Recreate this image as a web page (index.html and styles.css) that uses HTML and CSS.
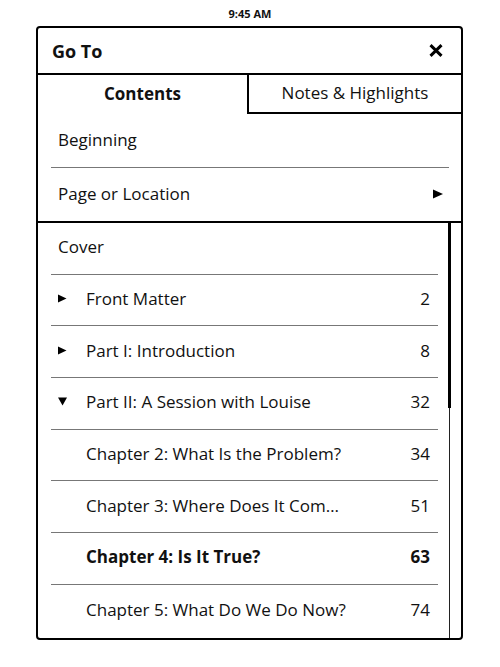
FILE: index.html
```html
<!DOCTYPE html>
<html>
<head>
<meta charset="utf-8">
<link rel="stylesheet" href="styles.css">
</head>
<body>
<div class="status">9:45 AM</div>
<div class="dialog">
  <div class="header">
    <span class="title">Go To</span>
    <svg class="close" width="14" height="13" viewBox="0 0 14 13"><path d="M1.5 1.2 L12.5 11.8 M12.5 1.2 L1.5 11.8" stroke="#000" stroke-width="3" fill="none"/></svg>
  </div>
  <div class="tabs">
    <div class="tab active">Contents</div>
    <div class="tab other">Notes &amp; Highlights</div>
  </div>
  <div class="fixed">
    <div class="frow"><span>Beginning</span></div>
    <div class="frow"><span>Page or Location</span><svg width="10" height="10" viewBox="0 0 10 10"><path d="M0 0.5 L10 5 L0 9.5Z" fill="#000"/></svg></div>
  </div>
  <div class="list">
    <div class="toc">
      <div class="row"><span class="label">Cover</span></div>
      <div class="row"><span class="exp"><svg width="9" height="9" viewBox="0 0 9 9"><path d="M0 0.5 L8.5 4.5 L0 8.5Z" fill="#000"/></svg></span><span class="label">Front Matter</span><span class="num">2</span></div>
      <div class="row"><span class="exp"><svg width="9" height="9" viewBox="0 0 9 9"><path d="M0 0.5 L8.5 4.5 L0 8.5Z" fill="#000"/></svg></span><span class="label">Part I: Introduction</span><span class="num">8</span></div>
      <div class="row"><span class="exp"><svg width="9" height="9" viewBox="0 0 9 9"><path d="M0 0.5 L9 0.5 L4.5 8.5Z" fill="#000"/></svg></span><span class="label">Part II: A Session with Louise</span><span class="num">32</span></div>
      <div class="row"><span class="exp"></span><span class="label">Chapter 2: What Is the Problem?</span><span class="num">34</span></div>
      <div class="row"><span class="exp"></span><span class="label">Chapter 3: Where Does It Com…</span><span class="num">51</span></div>
      <div class="row current"><span class="exp"></span><span class="label">Chapter 4: Is It True?</span><span class="num">63</span></div>
      <div class="row"><span class="exp"></span><span class="label">Chapter 5: What Do We Do Now?</span><span class="num">74</span></div>
    </div>
    <div class="track"><div class="thumb"></div></div>
  </div>
</div>
</body>
</html>
```

FILE: styles.css
```css
body {
  margin: 0;
  width: 500px;
  height: 667px;
  overflow: hidden;
  background: #fff;
  color: #111;
  font-family: "Open Sans", "Noto Sans", sans-serif;
}

.status {
  height: 26px;
  display: flex;
  align-items: center;
  justify-content: center;
  font-size: 11px;
  font-weight: 700;
}

.dialog {
  margin-left: 36px;
  width: 427px;
  height: 614px;
  box-sizing: border-box;
  border: 2px solid #000;
  border-radius: 4px;
  display: flex;
  flex-direction: column;
  overflow: hidden;
}

.header {
  height: 46.5px;
  flex: none;
  box-sizing: border-box;
  border-bottom: 2px solid #000;
  display: flex;
  align-items: center;
  justify-content: space-between;
  padding: 1px 18px 0 14px;
}

.title {
  font-size: 18px;
  font-weight: 700;
}

.close {
  display: block;
}

.tabs {
  display: flex;
  height: 39.5px;
  flex: none;
}

.tab {
  box-sizing: border-box;
  display: flex;
  align-items: center;
  justify-content: center;
  font-size: 17px;
  padding-bottom: 1px;
}

.tab.active {
  width: 209px;
  font-weight: 700;
}

.tab.other {
  flex: 1;
  border-left: 2px solid #000;
  border-bottom: 2px solid #000;
}

.fixed {
  flex: none;
  border-bottom: 2px solid #000;
}

.frow {
  height: 54px;
  box-sizing: border-box;
  margin: 0 12px 0 13px;
  padding: 0 6px 2px 7px;
  display: flex;
  align-items: center;
  justify-content: space-between;
  border-bottom: 1px solid #777;
  font-size: 17px;
}

.frow:last-child {
  height: 53px;
  border-bottom: none;
}

.list {
  flex: 1;
  min-height: 0;
  display: flex;
}

.toc {
  flex: 1;
  margin-left: 13px;
  overflow: hidden;
}

.row {
  height: 51.7px;
  box-sizing: border-box;
  border-bottom: 1px solid #777;
  display: flex;
  align-items: center;
  padding: 0 8px 3px 7px;
  font-size: 17px;
}

.row:last-child {
  border-bottom: none;
}

.row.current {
  font-weight: 700;
}

.exp {
  width: 28px;
  flex: none;
  display: flex;
  align-items: center;
}

.label {
  flex: 1;
  white-space: nowrap;
}

.num {
  flex: none;
}

.track {
  width: 3px;
  margin: 0 10px 0 10px;
  background: linear-gradient(to right, transparent 1px, #222 1px, #222 2px, transparent 2px);
}

.thumb {
  height: 185px;
  background: #000;
}
```
